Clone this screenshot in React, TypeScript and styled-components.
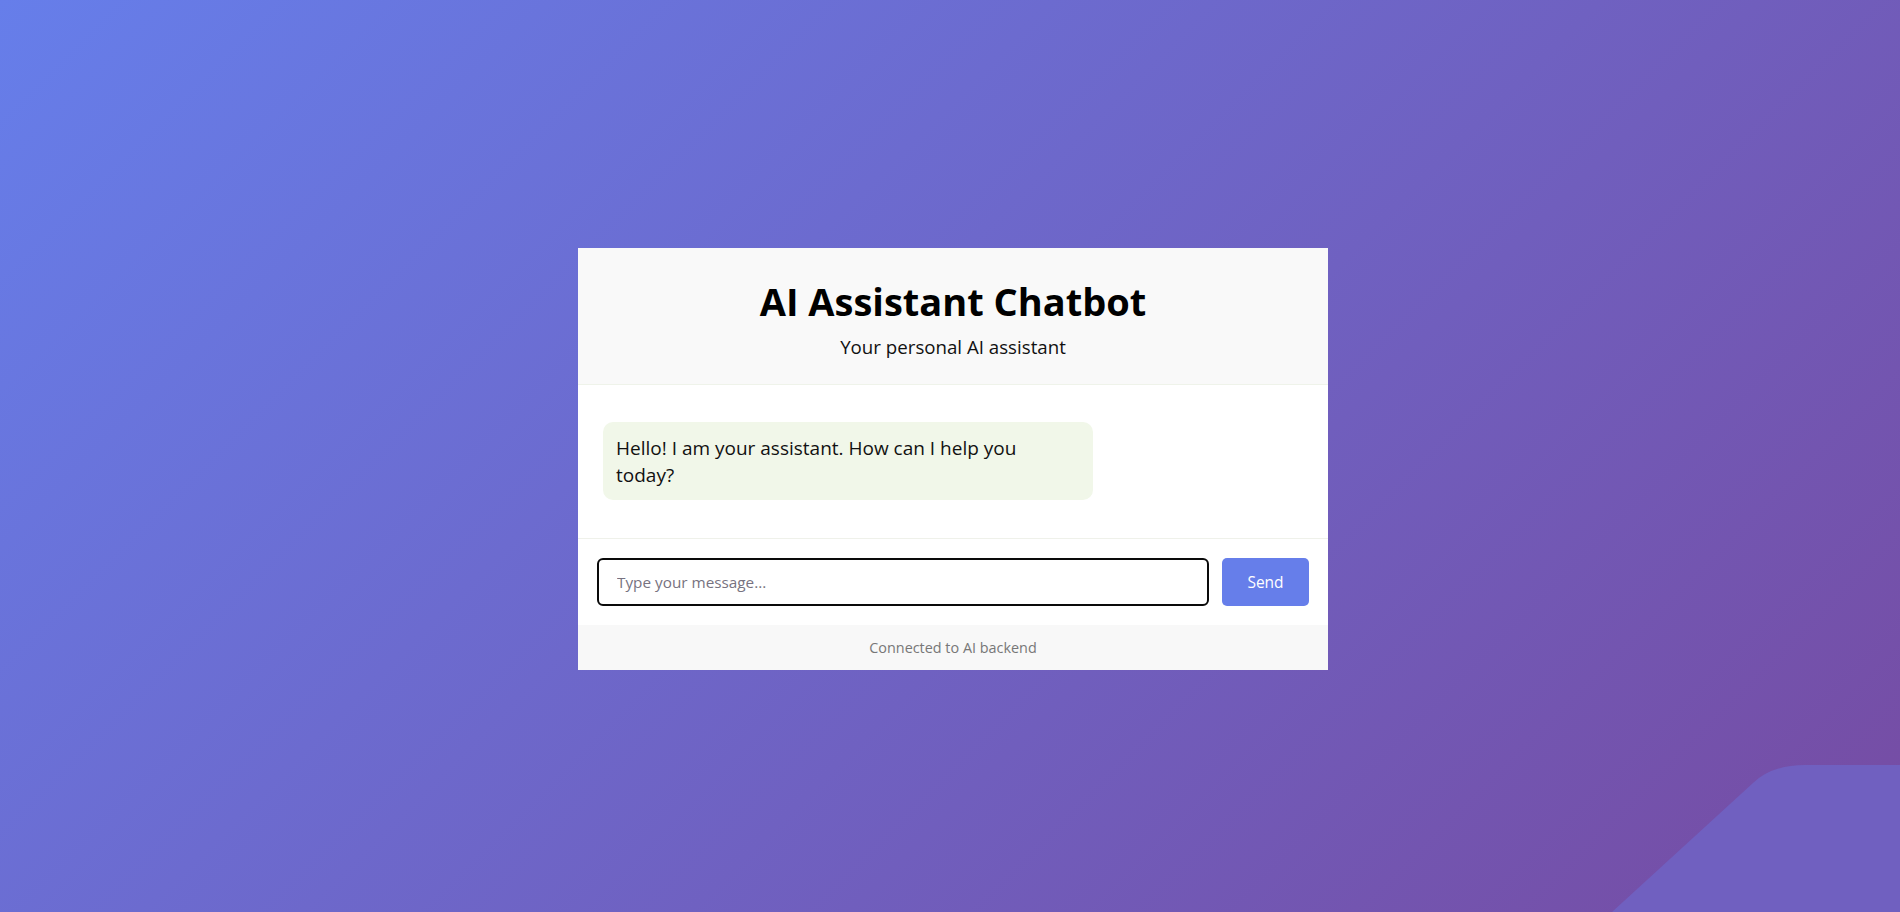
import styled, { createGlobalStyle } from "styled-components";

const GlobalStyle = createGlobalStyle`
  * {
    box-sizing: border-box;
  }
  body {
    margin: 0;
    font-family: "Open Sans", "Noto Sans", sans-serif;
    background: linear-gradient(135deg, #667eea 0%, #764ba2 100%);
    min-height: 100vh;
  }
`;

function App() {
  return (
    <>
      <GlobalStyle />
      <Page>
        <Card>
          <Header>
            <Title>AI Assistant Chatbot</Title>
            <Subtitle>Your personal AI assistant</Subtitle>
          </Header>
          <Messages>
            <Bubble>Hello! I am your assistant. How can I help you today?</Bubble>
          </Messages>
          <InputBar>
            <MessageInput placeholder="Type your message..." autoFocus />
            <SendButton>Send</SendButton>
          </InputBar>
          <Footer>Connected to AI backend</Footer>
        </Card>
        <Corner viewBox="0 0 288 147" aria-hidden="true">
          <path d="M0 147 L141 18 Q160 0 193 0 L288 0 L288 147 Z" fill="#7060c0" />
        </Corner>
      </Page>
    </>
  );
}
export default App;

const Page = styled.div`
  position: relative;
  height: 100vh;
  padding: 6px 0 0 6px;
  display: flex;
  align-items: center;
  justify-content: center;
  overflow: hidden;
`;

const Card = styled.div`
  position: relative;
  z-index: 1;
  width: 750px;
  background-color: #ffffff;
  display: flex;
  flex-direction: column;
`;

const Header = styled.div`
  background-color: #f9f9f9;
  border-bottom: 1px solid #eff3ea;
  padding: 31px 20px 24px;
  text-align: center;
`;

const Title = styled.h1`
  margin: 0;
  font-size: 38px;
  font-weight: 700;
  line-height: 1.2;
  color: #000000;
`;

const Subtitle = styled.p`
  margin: 9px 0 0;
  font-size: 18.7px;
  line-height: 1.4;
  color: #111111;
`;

const Messages = styled.div`
  padding: 37px 25px 38px;
  border-bottom: 1px solid #eff1ea;
`;

const Bubble = styled.div`
  max-width: 70%;
  padding: 13px 16px 11px 13px;
  border-radius: 10px;
  background-color: #f1f7e9;
  font-size: 19px;
  line-height: 27px;
  color: #111111;
`;

const InputBar = styled.div`
  display: flex;
  gap: 13px;
  padding: 19px;
`;

const MessageInput = styled.input`
  flex: 1;
  height: 48px;
  padding: 0 18px;
  border: 2px solid #0a0a0a;
  border-radius: 6px;
  outline: none;
  font-family: inherit;
  font-size: 15.3px;
  color: #111111;
  &::placeholder {
    color: #777280;
  }
`;

const SendButton = styled.button`
  width: 87px;
  height: 48px;
  border: none;
  border-radius: 5px;
  background-color: #667eea;
  color: #ffffff;
  font-family: inherit;
  font-size: 15.5px;
  cursor: pointer;
`;

const Footer = styled.div`
  height: 45px;
  display: flex;
  align-items: center;
  justify-content: center;
  background-color: #f8f8f8;
  color: #777777;
  font-size: 14.4px;
`;

const Corner = styled.svg`
  position: absolute;
  right: 0;
  bottom: 0;
  width: 288px;
  height: 147px;
`;
